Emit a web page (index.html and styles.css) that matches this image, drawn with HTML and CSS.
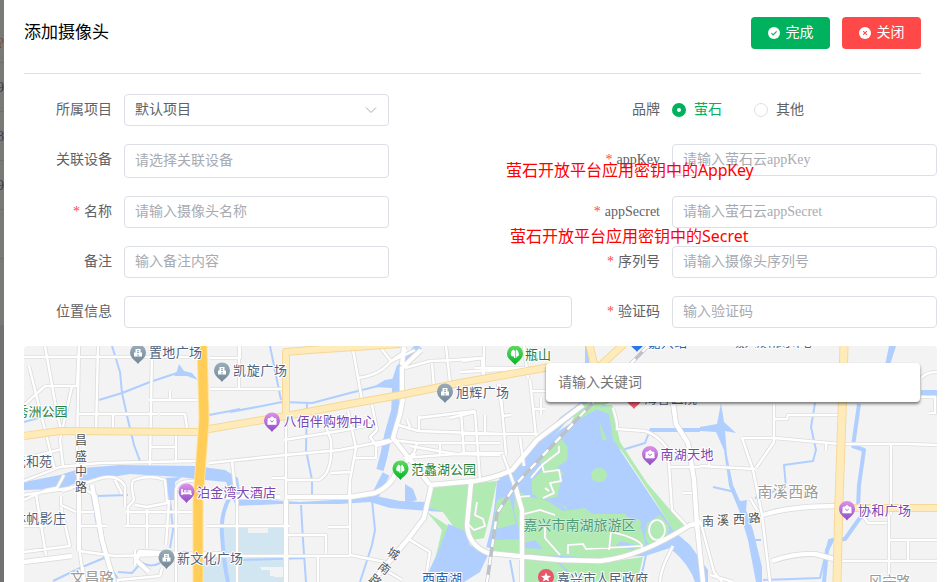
FILE: index.html
```html
<!DOCTYPE html>
<html lang="zh-CN">
<head>
<meta charset="utf-8">
<title>添加摄像头</title>
<link rel="stylesheet" href="styles.css">
</head>
<body>
<div class="backdrop"><span class="accent">?</span><span>9</span><span>8</span><span>9</span><i></i></div>
<main class="drawer">
  <header class="header">
    <h1>添加摄像头</h1>
    <div class="actions">
      <button class="btn done"><svg viewBox="0 0 12 12"><circle cx="6" cy="6" r="6" fill="#fff"/><path d="M3.4 6.1 5.2 7.9 8.6 4.3" fill="none" stroke="#00b15e" stroke-width="1.1"/></svg>完成</button>
      <button class="btn close"><svg viewBox="0 0 12 12"><circle cx="6" cy="6" r="6" fill="#fff"/><path d="M4.2 4.2 7.8 7.8M7.8 4.2 4.2 7.8" stroke="#ff4848" stroke-width="1.1"/></svg>关闭</button>
    </div>
  </header>
  <form class="form">
    <div class="item"><label>所属项目</label><div class="select"><span>默认项目</span><svg viewBox="0 0 12 12"><path d="M1 3.5 6 8.5 11 3.5" fill="none" stroke="#a8abb2"/></svg></div></div>
    <div class="item"><label>品牌</label><div class="radios"><span class="radio on"><i></i>萤石</span><span class="radio"><i></i>其他</span></div></div>
    <div class="item"><label>关联设备</label><input class="tall" placeholder="请选择关联设备"></div>
    <div class="item required"><label>appKey</label><input placeholder="请输入萤石云appKey"></div>
    <div class="item required"><label>名称</label><input placeholder="请输入摄像头名称"></div>
    <div class="item required"><label>appSecret</label><input placeholder="请输入萤石云appSecret"></div>
    <div class="item"><label>备注</label><input placeholder="输入备注内容"></div>
    <div class="item required"><label>序列号</label><input placeholder="请输入摄像头序列号"></div>
    <div class="item"><label>位置信息</label><input class="wide"></div>
    <div class="item required"><label>验证码</label><input placeholder="输入验证码"></div>
  </form>
  <section class="map">
    <svg class="canvas" viewBox="24 346 913 236">
      <defs>
        <linearGradient id="gSlate" x2="0" y2="1"><stop stop-color="#9cadb9"/><stop offset="1" stop-color="#718797"/></linearGradient>
        <linearGradient id="gPurple" x2="0" y2="1"><stop stop-color="#df91ea"/><stop offset="1" stop-color="#8b4cc5"/></linearGradient>
        <linearGradient id="gGreen" x2="0" y2="1"><stop stop-color="#5fdb61"/><stop offset="1" stop-color="#00b526"/></linearGradient>
        <path id="drop" d="M0 11C-1.5 8-8 5.5-8-.5A8 8 0 0 1 8-.5C8 5.5 1.5 8 0 11Z"/>
        <g id="pinBuilding"><use href="#drop" fill="url(#gSlate)"/><path d="M-4 3.500V-.5h1.500V-4h5v3.500h1.500v4Z" fill="#fff"/><path d="M-1-2.300H1M-1-.600H1M0 1V3.500" stroke="#8497a5" stroke-width=".9"/></g>
        <g id="pinShop"><use href="#drop" fill="url(#gPurple)"/><path d="M-4-2.500h8l.3 6h-8.600ZM-2-2.500Q0-6 2-2.500" fill="#fff" stroke="#fff" stroke-width=".6"/><path d="M-1.800-.5Q0 2.500 1.800-.5" fill="none" stroke="#b268d5"/></g>
        <g id="pinPark"><use href="#drop" fill="url(#gGreen)"/><path d="M-1.700-4.500C-5-2-5.500 3-1 2.500V4H0V-3ZM1.500-4.500C4-2 5.500 3 1.500 2.500V4H.6V-3Z" fill="#fff"/></g>

        <g id="lanes">
          <path d="M24 357H190M45 346 55 402 61 431M45 386H77L79 346M29 366 55 470M72 386 60 440 63 466M79 346 77 450 79 500 78 540 84 582M98 346 96 432M79 414H158M113 414V432M152 350 150 465M149 400H197M24 405 45 386M160 414H185L187 428M170 400 170 391M150 447H176M176 434V462M35 456 62 449M24 481 60 467 100 463 197 461"/>
          <path d="M24 495 70 488 95 480Q116 472 125 486V507M24 500 46 490 57 488 64 475M36 494 46 555M24 526H46M62 491 72 488M61 496 61 505 76 512M77 512 94 512M61 507 70 546 24 552M134 480Q130 482 134 500L128 507 128 526M134 480Q150 474 165 480L167 503 147 507 135 505M126 512H200M125 526H197M78 526H107M147 510V548M169 500 166 545M80 486 96 496 99 512 104 551M115 480 122 494M135 550V565M176 582V490Q177 480 195 481M79 551 115 556 200 554M83 567 84 582M118 582V580L160 576 162 568"/>
          <path d="M210 389H284M239 346V390M210 358H240V346M284 440 340 431 375 424M209 463 286 455 340 450 390 440M209 493 235 488 232 462M286 416V582M286 480H318Q333 475 331 440L325 425M272 478H286M348 411 356 448 350 480V555L385 562M331 473 350 472M353 350 362 400M380 347 391 361 407 350M358 378Q380 375 390 362L415 350M372 405 377 430 370 437 376 445 376 458M355 458 376 458M286 535H326V553M328 527H350M237 497V582M207 526H290M210 556H350M318 556V582M349 496 350 480M405 368 430 361 455 360 482 358M432 364 434 388M446 346 450 382M395 424 418 431 500 434M407 419 410 427M418 418 475 411M419 416V431M392 440 417 443 413 456M418 443H500M440 444V454M461 412 464 454M403 458 456 454 500 455M376 446 392 441M410 446 455 454"/>
          <path d="M407 538 430 552 425 582M380 567 402 580M460 372 540 368M462 361 482 358 483 378M484 346V380M475 368H540M524 346 528 378M530 380 536 436M532 391H546M533 409H545M541 415V398M498 384 503 416M485 415V435M500 384 506 455M503 416 511 415M461 434H538M520 438 524 466M461 453H503M503 455 513 482M450 418 475 412 480 480M613 408Q618 424 617 429L645 431Q658 435 667 448L669 465 672 510 686 525M669 467H700M683 493H692M673 546Q660 570 660 582"/>
          <path d="M774 403V442L756 468M742 438H775L840 444H907L937 445M742 438 753 470 762 515 770 582M700 466 755 469M774 419H787L788 415H838M826 442V450M891 445V515M861 513 868 523H887M889 540H937M843 561H937M908 541V560M889 515V582M921 378Q926 372 937 372M921 397H935V413H929M709 460V466M700 520 714 572 722 582M710 575 733 582M750 498 757 510"/>
        </g>
        <g id="streets">
          <path d="M24 562 72 556M79 551V490M92 485 102 540 114 582M200 555 140 552 136 560 149 572M222 554H198M209 497H280M286 497H350L375 493Q392 486 397 470L415 453M286 500V582M404 347 402 365M421 350 402 368 402 398M403 398 400 414 393 438 416 467 430 485M430 485 475 481Q495 478 512 470L537 440 583 405M431 487 424 518 408 539 372 582M471 483 467 525Q468 545 488 553L560 560 600 561Q640 557 690 525L700 523M514 482 522 510 522 582M673 403 676 424 688 443 694 480 697 525 703 582M763 515Q790 506 838 506M772 561Q795 553 815 554L838 560"/>
        </g>
        <g id="trails">
          <path d="M559 446 559 452 542 465 544 472 559 470 561 481 550 483 554 493 543 498M541 466 531 478M518 497 530 496M477 502 475 515 483 519 485 526 474 530 468 524M524 514 540 510 555 515M545 527 545 538 560 555M568 554 568 545 583 544 586 549 641 546M611 532 609 550M611 532Q635 537 642 545V552M549 491 545 488"/>
          <ellipse cx="657" cy="530" rx="8" ry="10"/>
        </g>
      </defs>
      <rect x="24" y="346" width="913" height="236" fill="#f3f3f3"/>
      <path class="basin" d="M222 528H248V533H268V528H284V567H273V560H248V565H220V582H202L204 565 222 555ZM202 555H260V568H270V576H284V582H202ZM222 528H284V567H222Z"/>
      <path d="M248 528H268V533H248ZM261 567H284V577H274V570H261Z" fill="#f3f3f3"/>
      <g class="water">
        <path d="M24 482 60 475 82 468 120 465 195 466 225 470 238 478 241 498 300 502 350 499 376 496 400 501 425 502 445 509 460 530 443 512 428 511 390 508 370 502 340 504 280 504 236 506 229 490 226 482 195 479 180 477 130 474 105 478 80 481 62 489 24 490Z"/>
        <path d="M497 481 520 470 560 430 600 405 612 405 620 450 650 495 675 532 690 545 708 570V582H695Q690 565 670 548L645 556 560 559 490 553Z"/>
        <path d="M448 524 465 530 470 545 488 555 480 572 464 582H424L435 558Z"/>
        <path d="M176 374 179 364 184 371 192 373 198 380 187 376 174 376ZM373 387 385 380 398 378 393 388ZM165 478 182 477 175 482V500H169ZM405 484 413 489 417 500 405 504ZM700 427 717 424 721 403 724 422 736 433 725 431 727 455 733 485 740 501 747 500 746 510 753 530 762 567V582H756L748 540 739 510 729 486 724 450 716 432 700 431ZM889 346H896L890 365H885ZM921 390H937V396H921Z"/>
      </g>
      <g class="streams">
        <path d="M112 346 120 372 122 393 128 420 134 445 140 461M99 400 122 393 150 382 177 373M24 422 60 412M90 485 96 520 104 557 120 582M53 581 80 568 104 558M96 496 128 495M171 478 170 500 173 530 170 548M135 557Q147 570 160 563M209 415 225 412 240 409M230 412 262 406 282 402 312 403 350 393 390 383M307 402 306 450 312 480 312 496M270 346 281 400M301 505 303 540 306 582M372 500 375 530 372 545 360 582M243 560 305 558M118 572 132 573 140 564M713 487 735 492M622 450 645 443 650 430 700 429M815 403 811 427 816 450 813 461 784 465 786 487 755 498M754 540H761M763 580 820 578 829 540 845 540 862 516"/>
        <path class="brook" d="M238 487Q220 505 222 535T228 582M587 346V365M859 404 853 446 864 450 859 485 858 508M824 582 827 550 832 540 845 539 862 515M650 430H700"/>
        <path class="river" d="M419 346 400 368 396 380 395 410 388 435 384 455 380 470M386 474 374 498M587 402 563 420 543 443 523 467 503 480 495 527 490 548"/>
      </g>
      <g class="park">
        <path d="M430 488 465 484 497 481 490 515 484 538 473 540 463 530 453 526 443 512 427 507ZM427 512 448 526 435 560 442 530ZM560 437 568 447 567 460 557 467 563 473 557 497 540 500 532 493 532 480 543 470 540 460ZM571 426 560 437 566 434ZM570 425 580 404 610 402 592 412ZM595 409 612 405 620 442 647 483 685 527 675 533 655 501 624 454 613 440 609 414ZM599 421 607 440 602 440ZM515 488 526 496 548 501 563 511 585 508 592 514 625 514 642 530 645 544 641 553 600 558 545 555 490 552 493 540 522 539 514 512ZM497 500 509 495 516 524 492 530ZM523 559 560 562 600 563 643 557 637 582H523ZM647 523 660 515 669 526 667 542 650 546 645 538Z"/>
        <ellipse cx="599" cy="475" rx="8" ry="7"/><ellipse cx="638" cy="524" rx="3" ry="5"/>
        <path d="M568 512 561 504 566 507Z"/>
      </g>
      <path d="M521 544 535 540 543 549 525 548ZM620 541 636 545 633 550 616 546Z" fill="#b0cfff"/>
      <path class="stream-cut" d="M557 561 578 582M646 555 640 582M510 560 514 582"/>
      <use href="#lanes" class="lane-edge"/>
      <use href="#streets" class="street-edge"/>
      <use href="#trails" class="trail-edge"/>
      <use href="#lanes" class="lane"/>
      <use href="#streets" class="street"/>
      <use href="#trails" class="trail"/>
      <path class="rail-bed" d="M648 346 583 413 517 483 497 513 487 582"/>
      <path class="rail" d="M648 346 583 413 517 483 497 513 487 582"/>
      <g class="major-edge"><path d="M24 436 60 431 198 432 209 429 286 416 350 404 400 395 460 383 550 367M286 418V352L310 350 400 344M589 343 596 372M624 344 600 366"/><path d="M845 508H937"/><path class="xl" d="M844 346 842 415 839 500 837 582"/></g>
      <g class="major"><path d="M24 436 60 431 198 432 209 429 286 416 350 404 400 395 460 383 550 367M286 418V352L310 350 400 344M589 343 596 372M624 344 600 366"/><path d="M845 508H937"/><path class="xl" d="M844 346 842 415 839 500 837 582"/></g>
      <path class="highway-edge" d="M202 346 204 420 198 500 198 582"/>
      <path class="highway" d="M202 346 204 420 198 500 198 582"/>

      <g class="pins">
        <use href="#pinBuilding" x="138" y="353"/><use href="#pinBuilding" x="222" y="371"/><use href="#pinBuilding" x="445" y="392"/><use href="#pinBuilding" x="166.500" y="558"/>
        <use href="#pinShop" x="272" y="421"/><use href="#pinShop" x="650" y="454.500"/><use href="#pinShop" x="847" y="509.500"/>
        <use href="#pinPark" x="400.500" y="469"/><use href="#pinPark" x="515" y="354"/>
        <g transform="translate(186.500 492)"><use href="#drop" fill="url(#gPurple)"/><path d="M-4.500-3V3M-4.500 1.500H4.500V3M-2.500-1H0M1-1H4V1H-4" fill="none" stroke="#fff" stroke-width="1.600"/></g>
        <g transform="translate(546 577.500)"><use href="#drop" fill="#e9566b"/><path d="M0-5 1.400-1.700 5-1.500 2.200.8 3 4 0 2.200-3 4-2.200.8-5-1.500-1.400-1.700Z" fill="#fff"/></g>
        <use href="#drop" x="637" y="341" fill="#2c77e8"/><use href="#drop" x="634" y="398" fill="#e9566b"/>
      </g>
      <g class="labels">
        <text x="149" y="357" textLength="53">置地广场</text><text x="233" y="375" textLength="54">凯旋广场</text><text x="456" y="397" textLength="53">旭辉广场</text><text x="177" y="562.500" textLength="66">新文化广场</text>
        <text x="13" y="466" textLength="39">元和苑</text><text x="13" y="523" textLength="53">林帆影庄</text><text x="557" y="583" textLength="91">嘉兴市人民政府</text><text x="644" y="403" textLength="53">海香医院</text><text x="648" y="347" textLength="39" class="navy">嘉兴站</text><text x="735" y="346" textLength="79">嘉兴城市展示中心</text>
        <g class="violet"><text x="283.500" y="426" textLength="92">八佰伴购物中心</text><text x="197" y="497" textLength="79">泊金湾大酒店</text><text x="660.500" y="459" textLength="53">南湖天地</text><text x="858" y="514.500" textLength="53">协和广场</text></g>
        <g class="leaf"><text x="15.500" y="415.500" textLength="52">秀洲公园</text><text x="411" y="474" textLength="65">范蠡湖公园</text><text x="525" y="358.500" textLength="26">瓶山</text></g>
        <text x="523.500" y="529.500" textLength="112" class="scenic">嘉兴市南湖旅游区</text>
        <text x="422" y="583" textLength="40" class="navy">西南湖</text>
        <g class="district"><text x="757.500" y="497" textLength="61">南溪西路</text><text x="70" y="583" textLength="44">文昌路</text><text x="868" y="587" textLength="43">风宁路</text></g>
        <g class="road-name"><text x="75" y="445">昌</text><text x="75" y="460.500">盛</text><text x="75" y="476">中</text><text x="75" y="491.500">路</text>
        <text x="702" y="526">南</text><text x="717" y="525">溪</text><text x="733" y="524">西</text><text transform="translate(749 523) rotate(-7)">路</text>
        <text transform="translate(386 554) rotate(32)">城</text><text transform="translate(377 568) rotate(38)">南</text><text transform="translate(368 580) rotate(40)">路</text></g>
      </g>
    </svg>
    <input class="search" placeholder="请输入关键词">
  </section>
</main>
<p class="note key">萤石开放平台应用密钥中的<b>AppKey</b></p>
<p class="note secret">萤石开放平台应用密钥中的<b>Secret</b></p>
</body>
</html>
```
FILE: styles.css
```css
* { box-sizing: border-box; }
body { margin: 0; width: 951px; height: 582px; overflow: hidden; display: flex; position: relative; background: #fff; font: 14px/32px "Liberation Serif", "Noto Sans CJK SC", serif; color: #606266; }
.backdrop { flex: 0 0 4px; height: 582px; padding-top: 14px; overflow: hidden; background: linear-gradient(#7b7976 0 325px, #737273 325px); display: flex; flex-direction: column; align-items: flex-end; color: #383b4c; }
.backdrop span { height: 49px; line-height: 50px; border-bottom: 1px solid #716f6c; }
.backdrop .accent { color: #6f4f33; line-height: 60px; }
.backdrop i { width: 4px; height: 49px; border-bottom: 1px solid #716f6c; }
.drawer { flex: 1; min-width: 0; padding: 0 14px 0 20px; }
.header { height: 74px; width: 897px; padding-top: 17px; border-bottom: 1px solid #dcdfe6; display: flex; justify-content: space-between; }
h1 { margin: 0; font-size: 17px; line-height: 32px; font-weight: 400; color: #000; }
.actions { display: flex; gap: 12px; }
.btn { width: 79px; height: 32px; padding: 0; border: 0; border-radius: 4px; font: inherit; line-height: 30px; color: #fff; display: flex; justify-content: center; align-items: center; gap: 6px; }
.btn svg { width: 12px; height: 12px; }
.done { background: #00b15e; }
.close { background: #ff4848; }
.form { width: 913px; margin-top: 20px; display: grid; grid-template-columns: 548px 365px; row-gap: 18px; }
.item { display: flex; align-items: flex-start; gap: 12px; }
label { width: 88px; height: 32px; line-height: 31px; text-align: right; white-space: nowrap; }
.required label::before { content: "*"; margin-right: 4px; color: #ff4848; }
input, .select { width: 265px; height: 32px; margin: 0; padding: 0 11px 1px 10px; border: 1px solid #dcdfe6; border-radius: 4px; background: #fff; font: inherit; line-height: 29px; color: #606266; outline: 0; }
.select { display: flex; justify-content: space-between; align-items: center; }
.select svg { width: 12px; height: 12px; }
input::placeholder { color: #a8abb2; opacity: 1; }
input.tall { height: 34px; }
input.wide { width: 448px; }
.radios { display: flex; gap: 32px; line-height: 31px; }
.radio { display: flex; align-items: center; gap: 8px; }
.radio i { width: 14px; height: 14px; border: 1px solid #dcdfe6; border-radius: 50%; }
.radio.on { color: #00b15e; }
.radio.on i { border: 5px solid #00b15e; }
.map { position: relative; width: 913px; height: 236px; margin-top: 18px; border-radius: 4px 4px 0 0; overflow: hidden; }
.canvas { display: block; width: 913px; height: 236px; }
.search { position: absolute; left: 522px; top: 17px; width: 374px; height: 39px; padding: 0 12px; border: 0; box-shadow: 0 2px 3px rgba(0, 0, 0, .5); }
.search::placeholder { color: #757575; }
.note { position: absolute; margin: 0; font: 16px/20px "Noto Sans CJK SC", sans-serif; color: #f00; white-space: nowrap; }
.note b { font-family: "Noto Sans", sans-serif; font-weight: 400; }
.key { left: 506px; top: 159px; }
.key b { letter-spacing: -.2px; }
.secret { left: 510px; top: 225px; }

.canvas path, .canvas ellipse { stroke-linejoin: round; }
.basin { fill: #d1e6f1; }
.water { fill: #b0cfff; }
.streams, .stream-cut { fill: none; stroke: #b0cfff; stroke-width: 2; }
.brook { stroke-width: 4; }
.river { stroke-width: 7.5; }
.park { fill: #b1eab3; }
.lane-edge, .street-edge, .lane, .street, .trail, .trail-edge { fill: none; }
.lane-edge { stroke: #dcdcdc; stroke-width: 4; }
.lane { stroke: #fff; stroke-width: 2.4; }
.street-edge { stroke: #d9d9d9; stroke-width: 6; }
.street { stroke: #fff; stroke-width: 4.4; }
.trail-edge { stroke: #d4dcd4; stroke-width: 2.6; }
.trail { stroke: #fff; stroke-width: 1.6; }
.rail-bed { fill: none; stroke: #bcc1ca; stroke-width: 3.6; }
.rail { fill: none; stroke: #fff; stroke-width: 2.4; stroke-dasharray: 8 10; }
.major-edge { fill: none; stroke: #f5d797; stroke-width: 8; }
.major { fill: none; stroke: #ffebba; stroke-width: 6.2; }
.major-edge .xl { stroke-width: 9; }
.major .xl { stroke-width: 7.2; }
.highway-edge { fill: none; stroke: #ffe3a0; stroke-width: 11; }
.highway { fill: none; stroke: #ffcd58; stroke-width: 9; }
.labels { font: 13px "Noto Sans CJK SC", sans-serif; fill: #4f617b; stroke: #fff; stroke-width: 2px; stroke-linejoin: round; }
.labels text { paint-order: stroke; }
.violet { fill: #7947b1; }
.leaf { fill: #24813b; }
.navy { fill: #2866af; }
.scenic { fill: #4e9d77; font-size: 14px; stroke: #d9f1e1; stroke-width: 1px; }
.district { fill: #9b9b9b; font-size: 15px; }
.road-name { fill: #555; font-size: 12px; }
```
